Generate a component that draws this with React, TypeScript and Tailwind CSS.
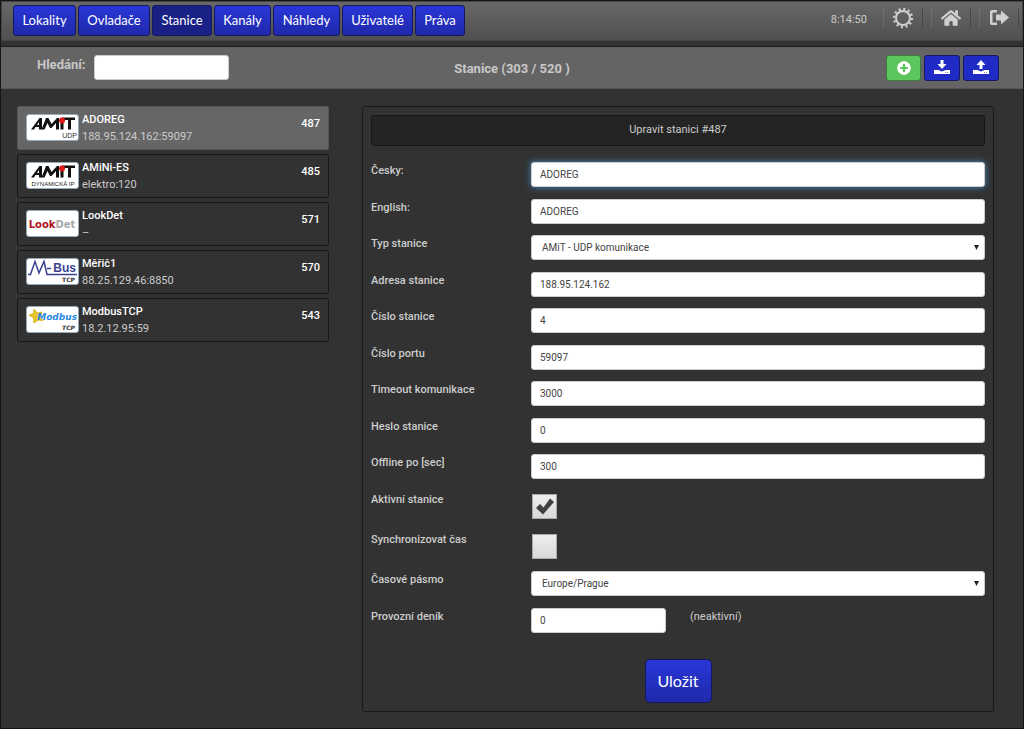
import { useState, type ReactNode } from "react";
import { FaHome, FaPlusCircle } from "react-icons/fa";
import { clsx } from "clsx";

const NAV = [
  { label: "Lokality", width: "w-[63px]" },
  { label: "Ovladače", width: "w-[72px]" },
  { label: "Stanice", width: "w-[60px]" },
  { label: "Kanály", width: "w-[57px]" },
  { label: "Náhledy", width: "w-[67px]" },
  { label: "Uživatelé", width: "w-[71px]" },
  { label: "Práva", width: "w-[50px]" },
];

type Brand = "amit-udp" | "amit-dyn" | "lookdet" | "mbus" | "modbus";

const STATIONS: { id: number; name: string; address: string; brand: Brand }[] = [
  { id: 487, name: "ADOREG", address: "188.95.124.162:59097", brand: "amit-udp" },
  { id: 485, name: "AMiNi-ES", address: "elektro:120", brand: "amit-dyn" },
  { id: 571, name: "LookDet", address: "–", brand: "lookdet" },
  { id: 570, name: "Měřič1", address: "88.25.129.46:8850", brand: "mbus" },
  { id: 543, name: "ModbusTCP", address: "18.2.12.95:59", brand: "modbus" },
];

const FIELD = "h-[25px] rounded-[3px] border border-[#ccc] bg-white text-[10px] text-[#444] outline-none";
const BLUE = "border border-[#14185c] bg-linear-to-b from-[#2936d8] to-[#1f2aaa] text-white";

export default function App() {
  const [section, setSection] = useState("Stanice");
  const [selected, setSelected] = useState(487);

  return (
    <div className="min-h-screen border border-[#161616] bg-[#323232] pb-4 font-[Roboto,'Noto_Sans',sans-serif] text-[11px] text-[#ccc]">
      {/* Top navigation */}
      <header className="flex h-10 items-start justify-between border border-[#444] bg-linear-to-b from-[#686868] to-[#505050] pl-[11px] pr-[3px]">
        <nav className="flex gap-[2px] pt-[3px]">
          {NAV.map(({ label, width }) => (
            <button
              key={label}
              onClick={() => setSection(label)}
              className={clsx(
                "h-[31px] rounded-[3px] font-[Lato,'Open_Sans',sans-serif] text-[13px] text-white",
                width,
                section === label ? "border border-[#14185c] bg-[#192086]" : BLUE
              )}
            >
              {label}
            </button>
          ))}
        </nav>
        <div className="flex items-center gap-2 pt-[6px]">
          <time className="pr-2 pt-1">8:14:50</time>
          <ToolLink label="Nastavení"><GearIcon /></ToolLink>
          <ToolLink label="Domů"><FaHome className="h-5 w-5" /></ToolLink>
          <ToolLink label="Odhlásit"><LogoutIcon /></ToolLink>
        </div>
      </header>

      {/* Search and actions */}
      <div className="mt-[5px] grid h-[43px] grid-cols-[1fr_auto_1fr] items-center border-y border-t-[#1a1a1a] border-b-[#555] bg-[#646464] px-6">
        <div className="flex items-start gap-2 pl-3">
          <label htmlFor="search" className="w-[49px] whitespace-nowrap pt-[2px] text-[13px] leading-4 font-bold text-[#c8c8c8]">Hledání:</label>
          <input id="search" className={clsx(FIELD, "w-[135px] px-2")} />
        </div>
        <h1 className="pt-[2px] text-[13px] font-bold text-[#c8c8c8]">Stanice (303 / 520 )</h1>
        <div className="flex justify-end gap-[3px]">
          <button aria-label="Přidat" className="flex h-[26px] w-[35px] items-center justify-center rounded-[3px] border border-[#3a7a3a] bg-[#5cc65c] text-white">
            <FaPlusCircle className="h-[14px] w-[14px]" />
          </button>
          <button aria-label="Stáhnout" className="flex h-[26px] w-9 items-center justify-center rounded-[3px] border border-[#14185c] bg-[#1f2bc4] text-white">
            <TrayIcon arrow="M6.500 0h3v4h3L8 9 3.500 4h3z" />
          </button>
          <button aria-label="Nahrát" className="flex h-[26px] w-9 items-center justify-center rounded-[3px] border border-[#14185c] bg-[#1f2bc4] text-white">
            <TrayIcon arrow="M6.500 9h3V5h3L8 0 3.500 5h3z" />
          </button>
        </div>
      </div>

      <main className="grid grid-cols-[312fr_632fr] items-start gap-[33px] pl-4 pr-[29px] pt-[17px]">
        {/* Station list */}
        <ul className="flex min-w-0 flex-col gap-1">
          {STATIONS.map((s) => (
            <li key={s.id}>
              <button
                onClick={() => setSelected(s.id)}
                className={clsx(
                  "flex h-11 w-full items-start gap-[3px] rounded-[2px] border px-2 pt-1 text-left",
                  selected === s.id ? "border-[#555] bg-[#666]" : "border-[#181818] bg-[#323232]"
                )}
              >
                <span className="pt-[3px]"><StationLogo brand={s.brand} /></span>
                <span className="min-w-0 flex-1 leading-[17px]">
                  <span className="block truncate font-medium text-white">{s.name}</span>
                  <span className="block truncate">{s.address}</span>
                </span>
                <span className="pt-1 leading-[17px] font-medium text-white">{s.id}</span>
              </button>
            </li>
          ))}
        </ul>

        {/* Station form */}
        <form className="min-w-0 rounded-[3px] border border-[#181818] p-2 text-[11px]" onSubmit={(e) => e.preventDefault()}>
          <h2 className="mb-4 flex h-[31px] items-center justify-center rounded-[3px] border border-[#161616] bg-[#242424]">
            Upravit stanici #487
          </h2>
          <TextRow id="name-cs" label="Česky:" value="ADOREG" gap="mb-3" active />
          <TextRow id="name-en" label="English:" value="ADOREG" gap="mb-[11px]" />
          <Row id="type" label="Typ stanice" gap="mb-3">
            <Select id="type" options={["AMiT - UDP komunikace", "AMiT - dynamická IP", "LookDet", "M-Bus TCP", "Modbus TCP"]} />
          </Row>
          <TextRow id="address" label="Adresa stanice" value="188.95.124.162" gap="mb-[11px]" />
          <TextRow id="number" label="Číslo stanice" value="4" gap="mb-3" />
          <TextRow id="port" label="Číslo portu" value="59097" gap="mb-[11px]" />
          <TextRow id="timeout" label="Timeout komunikace" value="3000" gap="mb-3" />
          <TextRow id="password" label="Heslo stanice" value="0" gap="mb-[11px]" />
          <TextRow id="offline" label="Offline po [sec]" value="300" gap="mb-3" />
          <CheckRow id="enabled" label="Aktivní stanice" checked />
          <CheckRow id="sync" label="Synchronizovat čas" />
          <Row id="timezone" label="Časové pásmo" gap="mb-3">
            <Select id="timezone" options={["Europe/Prague", "Europe/London", "UTC"]} />
          </Row>
          <Row id="log" label="Provozní deník" gap="mb-[26px]">
            <input id="log" defaultValue="0" className={clsx(FIELD, "w-[135px] px-2")} />
            <span className="pl-6 leading-[17px]">(neaktivní)</span>
          </Row>
          <div className="flex justify-center">
            <button type="submit" className={clsx(BLUE, "h-11 w-[67px] rounded-[5px] font-[Lato,'Open_Sans',sans-serif] text-base")}>
              Uložit
            </button>
          </div>
        </form>
      </main>
    </div>
  );
}

function Row({ id, label, gap, children }: { id: string; label: string; gap: string; children: ReactNode }) {
  return (
    <div className={clsx("flex items-start", gap)}>
      <label htmlFor={id} className="w-40 shrink-0 leading-[17px] font-medium">{label}</label>
      {children}
    </div>
  );
}

function TextRow({ id, label, value, gap, active }: {
  id: string; label: string; value: string; gap: string; active?: boolean;
}) {
  return (
    <Row id={id} label={label} gap={gap}>
      <input
        id={id}
        defaultValue={value}
        className={clsx(FIELD, "min-w-0 flex-1 px-2", active && "border-[#66afe9] shadow-[0_0_6px_rgba(70,160,235,0.8)]")}
      />
    </Row>
  );
}

function CheckRow({ id, label, checked }: { id: string; label: string; checked?: boolean }) {
  return (
    <div className="flex h-10 items-start">
      <label htmlFor={id} className="w-40 shrink-0 leading-[17px] font-medium">{label}</label>
      <span className="grid pl-[1px] pt-[3px]">
        <input
          id={id}
          type="checkbox"
          defaultChecked={checked}
          className="peer col-start-1 row-start-1 h-[25px] w-[25px] appearance-none border border-[#aaa] bg-linear-to-b from-[#eee] to-[#d8d8d8]"
        />
        <svg viewBox="0 0 25 25" className="pointer-events-none invisible col-start-1 row-start-1 h-[25px] w-[25px] peer-checked:visible">
          <path d="M4 14l4-4 3.500 3.500L18 4.500l4 3.500L11 20.500z" fill="#404040" />
        </svg>
      </span>
    </div>
  );
}

function Select({ id, options }: { id: string; options: string[] }) {
  return (
    <span className="grid min-w-0 flex-1 items-center">
      <select id={id} className={clsx(FIELD, "col-start-1 row-start-1 w-full appearance-none px-[10px]")}>
        {options.map((o) => <option key={o}>{o}</option>)}
      </select>
      <svg viewBox="0 0 5 5" className="pointer-events-none col-start-1 row-start-1 mr-[6px] h-[5px] w-[5px] justify-self-end">
        <path d="M0 0h5L2.500 5z" fill="#222" />
      </svg>
    </span>
  );
}

function ToolLink({ label, children }: { label: string; children: ReactNode }) {
  return (
    <a href="#" aria-label={label} className="flex h-5 w-10 items-center justify-center border-x border-l-[#6e6e6e] border-r-[#484848] text-[#d0d0d0]">
      {children}
    </a>
  );
}

function GearIcon() {
  return (
    <svg viewBox="0 0 22 22" className="h-[22px] w-[22px]" fill="none" stroke="currentColor">
      <circle cx="11" cy="11" r="7" strokeWidth="2" />
      <circle cx="11" cy="11" r="9" strokeWidth="2.400" strokeDasharray="2 2.712" />
    </svg>
  );
}

function LogoutIcon() {
  return (
    <svg viewBox="0 0 20 18" className="h-[18px] w-5" fill="currentColor">
      <path d="M8 1H3a2 2 0 0 0-2 2v11a2 2 0 0 0 2 2h5v-2.500H3.500v-10H8z" />
      <path d="M7 5.500h5V1.500l8 7-8 7v-4H7z" />
    </svg>
  );
}

function TrayIcon({ arrow }: { arrow: string }) {
  return (
    <svg viewBox="0 0 16 15" className="h-[15px] w-4" fill="currentColor">
      <path d={arrow} />
      <path d="M0 10h4.500L8 11.500l3.500-1.500H16v4H0z" />
      <path d="M11 12h1v1h-1zM13 12h1v1h-1z" fill="#8088dd" />
    </svg>
  );
}

function StationLogo({ brand }: { brand: Brand }) {
  return (
    <svg viewBox="0 0 53 27" className="h-[27px] w-[53px]" fontFamily="'Liberation Sans', sans-serif">
      <rect x=".5" y=".5" width="52" height="26" rx="2.500" fill="#fff" stroke="#9ab" />
      {(brand === "amit-udp" || brand === "amit-dyn") && (
        <>
          <g fill="#111">
            <path d="M5 15.500L13.500 4H16v11.500h-3v-2.500H9.500L8 15.500zM11 11h2V8z" />
            <path d="M15.500 15.500L20 4h2.500l3 6L31 4h2v11.500h-3V9l-4.500 5h-1.500L21.500 9l-3 6.500z" />
            <path d="M34.500 9h3v6.500h-3zM36 3.500h13V6h-4v9.500h-3V6h-6z" />
          </g>
          <circle cx="36" cy="6.500" r="3" fill="#e01818" />
          {brand === "amit-udp"
            ? <text x="51" y="24" fontSize="7" textAnchor="end" fill="#333">UDP</text>
            : <text x="27" y="24" fontSize="6" textAnchor="middle" fill="#222">DYNAMICKÁ IP</text>}
        </>
      )}
      {brand === "lookdet" && (
        <text x="26" y="18" fontSize="10" fontWeight="700" textAnchor="middle" fontFamily="'DejaVu Sans', sans-serif" fill="#b01020">
          Look<tspan fill="#aaa">Det</tspan>
        </text>
      )}
      {brand === "mbus" && (
        <>
          <path d="M2 16.500h2.500L9 3.500l4 11.500L18 3.500l3 13H51M21 10.500h4" fill="none" stroke="#3a4290" strokeWidth="1.500" />
          <text x="50" y="14" fontSize="12" fontWeight="700" textAnchor="end" fill="#3a4290">Bus</text>
          <text x="49" y="24" fontSize="6" fontWeight="700" textAnchor="end" fontFamily="'DejaVu Sans', sans-serif" fill="#333">TCP</text>
        </>
      )}
      {brand === "modbus" && (
        <>
          <path d="M8 3l3 4 5-1-2 4.500 3 4-5-.5-4 3-.5-5L3 9l4.500-1.500z" fill="#e6c62c" stroke="#d8b828" />
          <text x="51" y="14" fontSize="9" fontWeight="700" fontStyle="italic" textAnchor="end" fontFamily="'DejaVu Sans', sans-serif" fill="#2a88e0">Modbus</text>
          <text x="49" y="24" fontSize="6" fontWeight="700" fontStyle="italic" textAnchor="end" fontFamily="'DejaVu Sans', sans-serif" fill="#333">TCP</text>
        </>
      )}
    </svg>
  );
}
